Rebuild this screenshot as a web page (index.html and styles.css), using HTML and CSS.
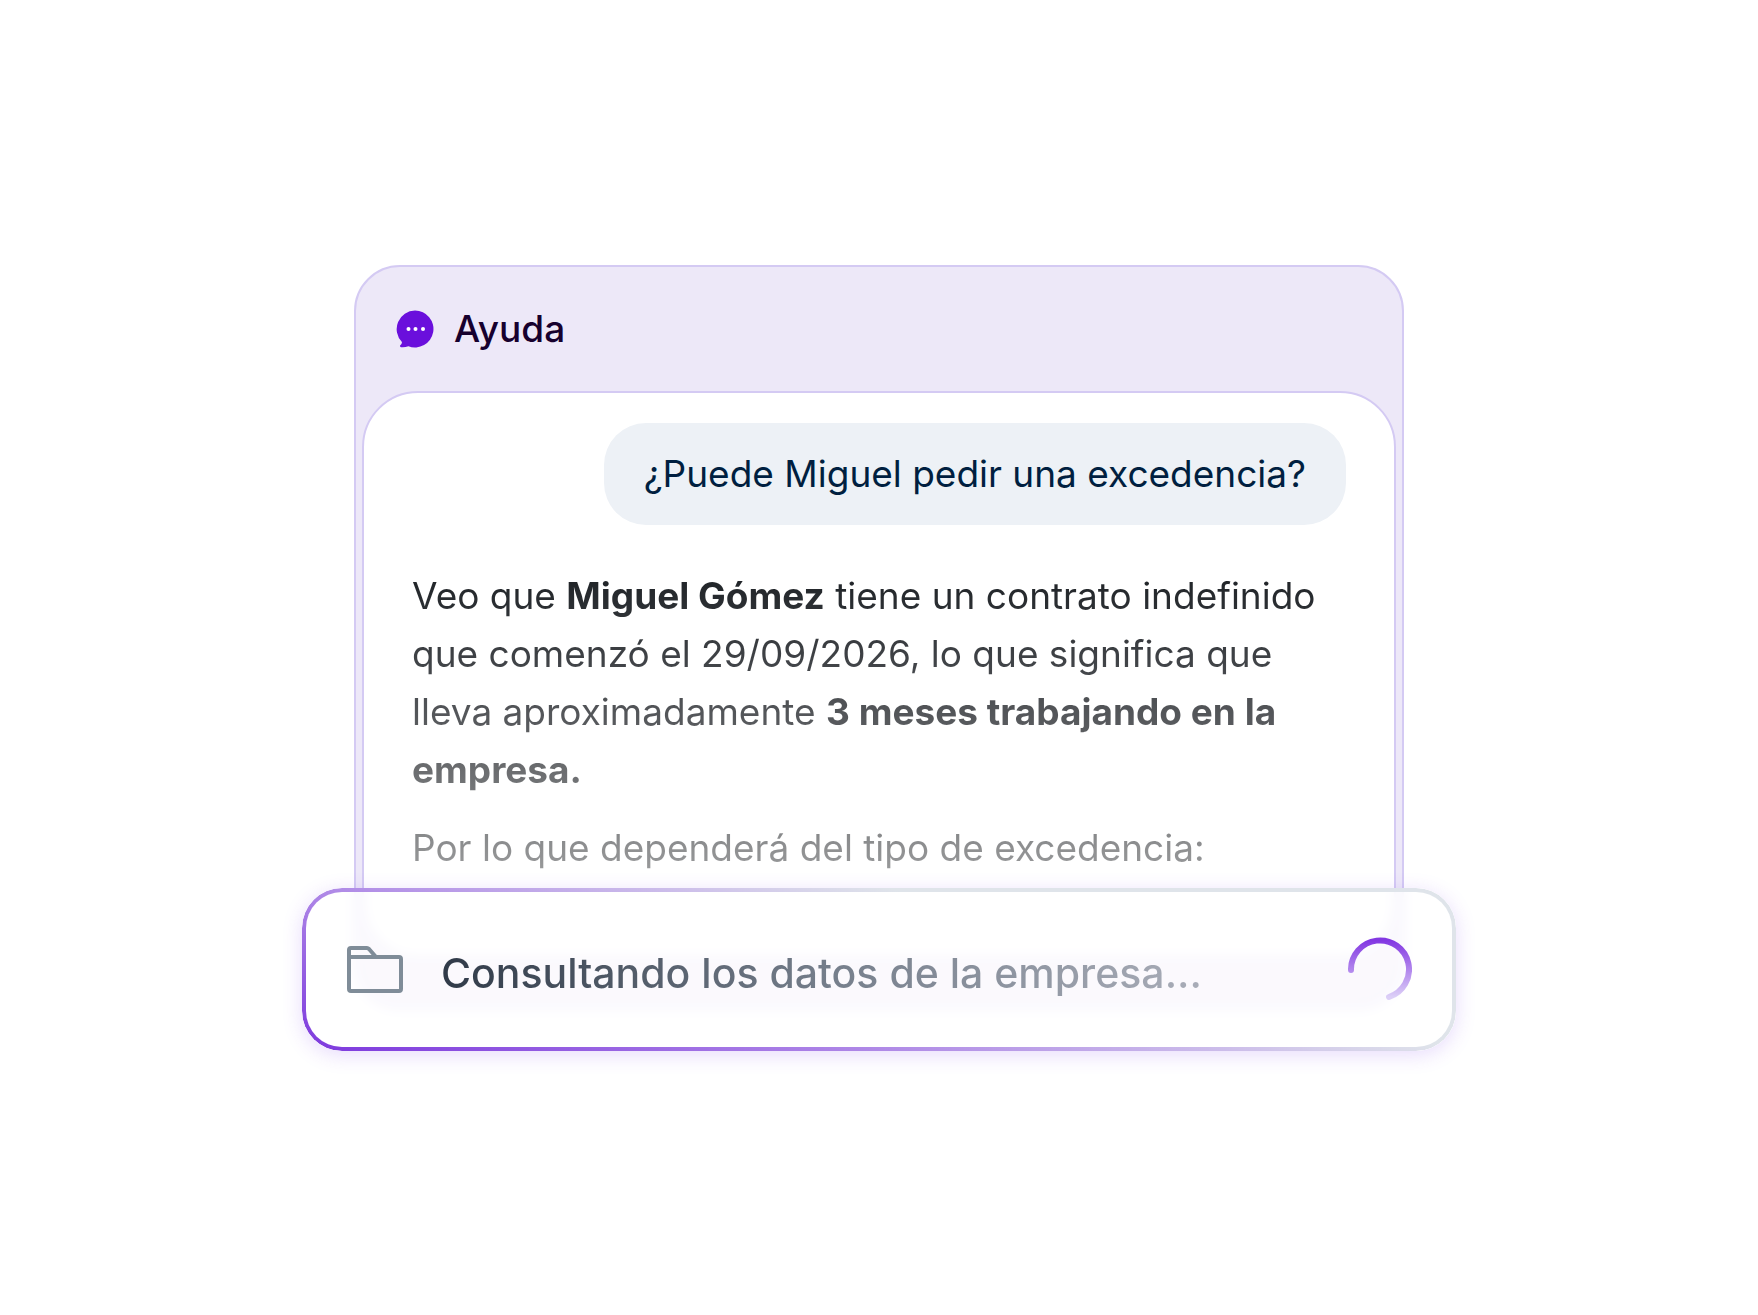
FILE: index.html
```html
<!DOCTYPE html>
<html lang="es">
<head>
  <meta charset="UTF-8">
  <meta name="viewport" content="width=device-width, initial-scale=1.0">
  <title>Ayuda</title>
  <link rel="stylesheet" href="styles.css">
</head>
<body>
  <main class="stage">
    <section class="panel">
      <header class="panel-header">
        <svg class="chat-icon" viewBox="0 0 38 38" aria-hidden="true">
          <path fill="#6a0fdc" d="M19 .5a18.5 18.5 0 1 1-6.600 35.800c-2.500.9-5.300 1.300-7.400.9-1.200-.2-1.300-1.500-.5-2.100 1-.8 1.600-2 1.400-3.200A18.500 18.500 0 0 1 19 .5z"/>
          <circle cx="12.500" cy="19" r="2" fill="#fff"/>
          <circle cx="19.500" cy="19" r="2" fill="#fff"/>
          <circle cx="27" cy="19" r="2" fill="#fff"/>
        </svg>
        <h1>Ayuda</h1>
      </header>

      <div class="chat">
        <p class="question">¿Puede Miguel pedir una excedencia?</p>
        <div class="answer">
          <p>Veo que <strong>Miguel Gómez</strong> tiene un contrato indefinido que comenzó el 29/09/2026, lo que significa que lleva aproximadamente <strong>3 meses trabajando en la empresa.</strong></p>
          <p>Por lo que dependerá del tipo de excedencia:</p>
        </div>
      </div>
    </section>

    <div class="status" role="status">
      <svg class="folder-icon" viewBox="0 0 58 50" fill="none" stroke="#7f8c98" stroke-width="4" stroke-linejoin="round" aria-hidden="true">
        <path d="M3 13h50q2 0 2 2v30q0 2-2 2H5q-2 0-2-2V6q0-2 2-2h16q1 0 2 1l7 8"/>
      </svg>
      <span class="status-text">Consultando los datos de la empresa...</span>
      <svg class="spinner" viewBox="0 0 64 64" fill="none" aria-hidden="true">
        <defs>
          <linearGradient id="spin" x1="0" y1="0" x2="0" y2="1">
            <stop offset="0" stop-color="#8338e2"/>
            <stop offset="1" stop-color="#dccff7"/>
          </linearGradient>
        </defs>
        <path d="M3 33A29 29 0 1 1 41 60" stroke="url(#spin)" stroke-width="6" stroke-linecap="round"/>
      </svg>
    </div>
  </main>
</body>
</html>
```
FILE: styles.css
```css
* {
  box-sizing: border-box;
}
body {
  margin: 0;
  background-color: #fff;
  font-family: Inter, "Liberation Sans", sans-serif;
  font-size: 37px;
}
h1, p {
  margin: 0;
}
.stage {
  display: flex;
  flex-direction: column;
  align-items: center;
  justify-content: center;
  min-height: 100vh;
  padding: 40px;
}
.panel {
  width: 100%;
  max-width: 1050px;
  padding: 0 6px 48px;
  border: 2px solid #d4caf3;
  border-radius: 46px;
  background-color: #ede8f8;
}
.panel-header {
  display: flex;
  align-items: center;
  gap: 20px;
  height: 124px;
  padding: 0 34px;
}
.chat-icon {
  width: 38px;
  height: 38px;
}
.panel-header h1 {
  color: #17002e;
  font-size: 37px;
  font-weight: 500;
}
.chat {
  display: flex;
  flex-direction: column;
  padding: 30px 48px 80px;
  border: 2px solid #d4caf3;
  border-radius: 56px;
  background-color: #fff;
}
.question {
  align-self: flex-end;
  padding: 22px 40px;
  border-radius: 42px;
  background-color: #edf1f6;
  color: #001f40;
  line-height: 58px;
}
.answer {
  padding-top: 42px;
  background-image: linear-gradient(#1c2024 12%, #3f4246 38%, #5f6164 62%, #98999a 98%);
  -webkit-background-clip: text;
  background-clip: text;
  color: transparent;
  line-height: 58px;
}
.answer p + p {
  margin-top: 20px;
}
.answer strong {
  font-weight: 700;
}

/* status bar laid over the bottom of the panel */
.status {
  position: relative;
  display: flex;
  align-items: center;
  width: 100%;
  max-width: 1154px;
  height: 163px;
  margin-top: -121px;
  padding: 0 44px;
  border-radius: 40px;
  background-color: rgba(255, 255, 255, 0.75);
  box-shadow: 0 4px 20px rgba(124, 58, 237, 0.18);
  backdrop-filter: blur(6px);
}
.status::before {
  content: "";
  position: absolute;
  inset: 0;
  padding: 4px;
  border-radius: 40px;
  background: linear-gradient(16deg, #7c38dd, #ab82e6 31%, #ccbdea 54%, #dfe4ea 67%);
  mask: linear-gradient(#000 0 0) content-box exclude, linear-gradient(#000 0 0);
}
.folder-icon {
  width: 58px;
  height: 50px;
}
.status-text {
  margin-left: 37px;
  padding-top: 8px;
  background-image: linear-gradient(90deg, #303a48, #747d8a 50%, #a9adb8);
  -webkit-background-clip: text;
  background-clip: text;
  color: transparent;
  font-size: 41px;
  font-weight: 500;
}
.spinner {
  width: 64px;
  height: 64px;
  margin-left: auto;
}
```
